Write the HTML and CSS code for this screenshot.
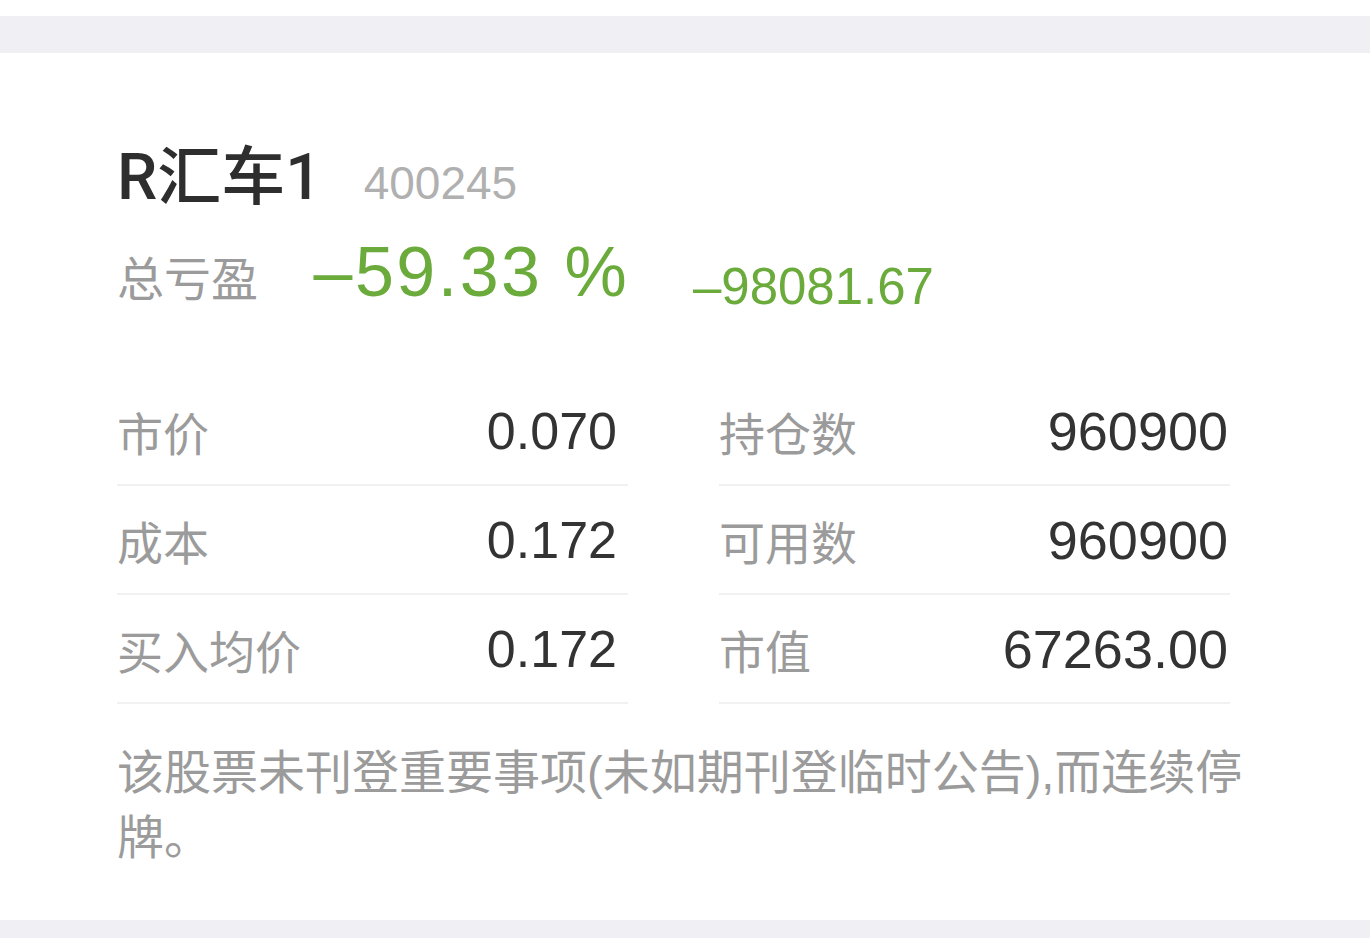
FILE: index.html
```html
<!DOCTYPE html>
<html lang="zh-CN">
<head>
  <meta charset="UTF-8">
  <meta name="viewport" content="width=device-width, initial-scale=1.0">
  <title>持仓详情</title>
  <link rel="stylesheet" href="styles.css">
</head>
<body>
  <div class="top-gap"></div>
  <div class="band"></div>

  <!-- Position card -->
  <section class="card">
    <div class="title-row">
      <h1 class="stock-name">R汇车1</h1>
      <span class="stock-code">400245</span>
    </div>

    <div class="profit-row">
      <span class="profit-label">总亏盈</span>
      <span class="profit-pct">–59.33 %</span>
      <span class="profit-amt">–98081.67</span>
    </div>

    <div class="stats">
      <div class="cell"><span class="label">市价</span><span class="value">0.070</span></div>
      <div class="cell"><span class="label">持仓数</span><span class="value">960900</span></div>
      <div class="cell"><span class="label">成本</span><span class="value">0.172</span></div>
      <div class="cell"><span class="label">可用数</span><span class="value">960900</span></div>
      <div class="cell"><span class="label">买入均价</span><span class="value">0.172</span></div>
      <div class="cell"><span class="label">市值</span><span class="value">67263.00</span></div>
    </div>

    <p class="note">该股票未刊登重要事项(未如期刊登临时公告),而连续停牌。</p>
  </section>

  <div class="band band-bottom"></div>
</body>
</html>
```

FILE: styles.css
```css
body { margin: 0; background-color: #fff; font-family: "Liberation Sans", "Noto Sans CJK SC", sans-serif; color: #333; }
.top-gap { height: 16px; background-color: #fff; }
.band { height: 37px; background-color: #efeff4; }
.band-bottom { height: 18px; }
.card { height: 867px; box-sizing: border-box; padding: 85px 120px 0 117px; background-color: #fff; }

.title-row { display: flex; align-items: baseline; gap: 42px; height: 80px; }
.stock-name { margin: 0; font-family: Roboto, "Noto Sans CJK SC", sans-serif; font-size: 64px; font-weight: 500; line-height: 80px; color: #2e2e2e; }
.stock-code { font-size: 46px; color: #b0b0b0; }

.profit-row { height: 80px; margin-top: 14px; line-height: 80px; white-space: nowrap; }
.profit-row span { display: inline-block; }
.profit-label { width: 192px; font-size: 47px; color: #9b9b9b; }
.profit-pct { width: 375px; font-size: 70px; letter-spacing: 2.5px; color: #6aab3c; }
.profit-amt { font-size: 51px; color: #6aab3c; vertical-align: -8px; }

.stats { display: grid; grid-template-columns: 511px 511px; column-gap: 91px; margin-top: 65px; }
.cell { display: flex; justify-content: space-between; align-items: center; height: 107px; border-bottom: 2px solid #f1f1f1; }
.cell:nth-child(odd) { padding-right: 11px; }
.cell:nth-child(even) { padding-right: 2px; }
.cell:nth-child(even) .value { font-size: 54px; }
.label { font-size: 46px; color: #9b9b9b; }
.value { font-size: 52px; color: #333; }

.note { width: 1140px; margin: 36px 0 0; font-size: 47px; line-height: 65px; color: #9b9b9b; }
```
